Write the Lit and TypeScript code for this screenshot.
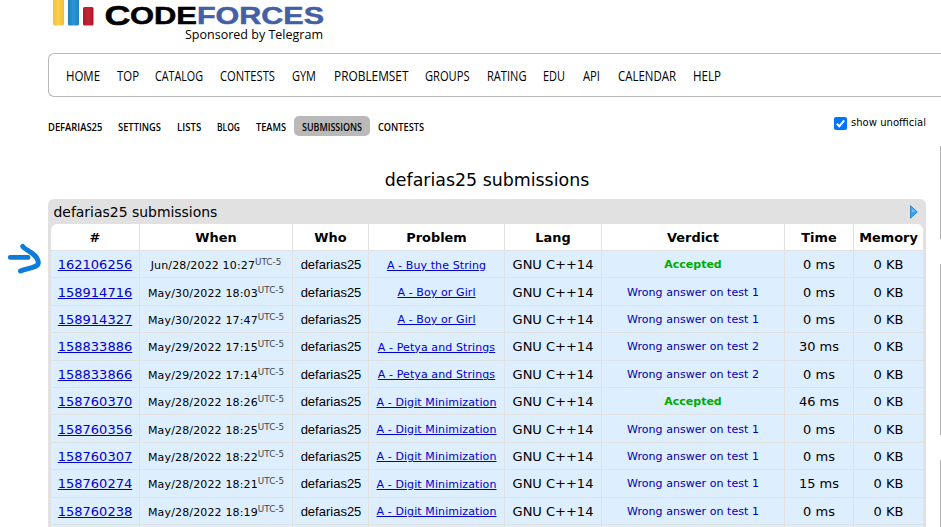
import { LitElement, html, svg, css } from "lit";
import { customElement } from "lit/decorators.js";
import { styleMap } from "lit/directives/style-map.js";

type Item = [label: string, width: number, gap: number];

const MENU: Item[] = [
  ["HOME", 34, 17], ["TOP", 22, 16], ["CATALOG", 48, 17], ["CONTESTS", 55, 17],
  ["GYM", 24, 17.5], ["PROBLEMSET", 74.5, 17], ["GROUPS", 44.5, 17], ["RATING", 39.5, 17],
  ["EDU", 22, 18], ["API", 17, 18], ["CALENDAR", 58, 17], ["HELP", 28, 0],
];

const TABS: [string, number][] = [
  ["DEFARIAS25", 54.3], ["SETTINGS", 43], ["LISTS", 24.2], ["BLOG", 23],
  ["TEAMS", 30], ["SUBMISSIONS", 60], ["CONTESTS", 46],
];

const HEADS = ["#", "When", "Who", "Problem", "Lang", "Verdict", "Time", "Memory"];

const ROWS: [string, string, string, string, string][] = [
  ["162106256", "Jun/28/2022 10:27", "A - Buy the String", "", "0 ms"],
  ["158914716", "May/30/2022 18:03", "A - Boy or Girl", "1", "0 ms"],
  ["158914327", "May/30/2022 17:47", "A - Boy or Girl", "1", "0 ms"],
  ["158833886", "May/29/2022 17:15", "A - Petya and Strings", "2", "30 ms"],
  ["158833866", "May/29/2022 17:14", "A - Petya and Strings", "2", "0 ms"],
  ["158760370", "May/28/2022 18:26", "A - Digit Minimization", "", "46 ms"],
  ["158760356", "May/28/2022 18:25", "A - Digit Minimization", "1", "0 ms"],
  ["158760307", "May/28/2022 18:22", "A - Digit Minimization", "1", "0 ms"],
  ["158760274", "May/28/2022 18:21", "A - Digit Minimization", "1", "15 ms"],
  ["158760238", "May/28/2022 18:19", "A - Digit Minimization", "1", "0 ms"],
];

const fitted = (label: string, width: number, height: number, baseline: number) => html`
  <svg width=${width} height=${height}>${svg`<text x="0" y=${baseline} textLength=${width} lengthAdjust="spacingAndGlyphs">${label}</text>`}</svg>`;

@customElement("app-root")
export class AppRoot extends LitElement {
  static styles = css`
    :host {
      display: block; position: relative; width: 941px; height: 527px; overflow: hidden;
      background: #fff; color: #000; font-family: Verdana, "DejaVu Sans", sans-serif;
    }
    * { box-sizing: border-box; }
    svg { display: block; overflow: visible; flex: none; }
    .page { margin-left: 48px; }
    .logo { height: 53px; }
    .menu {
      height: 44px; border: 1px solid #b9b9b9; border-right: 0; border-radius: 6px 0 0 6px;
      display: flex; align-items: center; padding-left: 17px;
      font: 15.2px "Open Sans", sans-serif;
    }
    .sub { display: flex; height: 20px; margin-top: 19px; width: 878px; align-items: center; }
    .tab { height: 20px; padding: 0 8px; border-radius: 5px; font: 650 10.8px "Open Sans", sans-serif; }
    .tab:first-child { padding-left: 0; }
    .tab.on { background: #b9b9b9; }
    .check { margin-left: auto; display: flex; align-items: center; gap: 4px; font-size: 10.4px; height: 13px; position: relative; top: -5px; }
    .check svg:first-child { position: relative; top: 2px; }
    h1 { margin: 31px 0 0; height: 32px; width: 878px; text-align: center; font-size: 17.4px; font-weight: 400; line-height: 26px; }
    .panel { width: 878px; background: #e1e1e1; border-radius: 6px 6px 0 0; padding: 0 3px; height: 340px; }
    .title { height: 25px; display: flex; align-items: center; justify-content: space-between; padding: 0 5px 0 2.5px; font-size: 13.95px; }
    .grid { border-radius: 6px 6px 0 0; overflow: hidden; }
    .row {
      display: grid; grid-template-columns: 89px 153px 76px 136px 97px 183px 69px 69px;
      height: 27.4px; background: #ddeeff; font-size: 13px;
    }
    .row.head { height: 27px; background: #fff; font-weight: 700; font-size: 12.9px; }
    .cell {
      border-right: 1px solid #e1e1e1; border-bottom: 1px solid #e1e1e1; padding-top: 2px;
      display: flex; align-items: center; justify-content: center; white-space: nowrap; line-height: 16px;
    }
    .cell:last-child { border-right: 0; }
    .when { font-size: 11px; padding-top: 4px; letter-spacing: .15px; }
    sup { font-size: 8.8px; letter-spacing: 0; color: #444; line-height: 8px; position: relative; top: -4px; vertical-align: baseline; }
    .who { font-family: "Liberation Sans", Arial, sans-serif; padding: 2px 0 0 1px; }
    a { color: #0000cc; text-decoration: underline; }
    .small { font-size: 11px; letter-spacing: .05px; }
    .problem { letter-spacing: .1px; padding-top: 3px; }
    .wrong { color: #0000aa; }
    .ok { color: #00aa00; font-weight: 700; font-size: 11px; }
    .side { position: absolute; left: 940px; width: 1px; background: #b0b0b0; }
    .arrow { position: absolute; left: 0; top: 240px; }
  `;

  private logo() {
    return html`<svg class="logo" width="300" height="53">
      <defs>
        <linearGradient id="y"><stop stop-color="#f7c22e"/><stop offset=".5" stop-color="#fbd050"/><stop offset="1" stop-color="#efbd31"/></linearGradient>
        <linearGradient id="b"><stop stop-color="#1d80c0"/><stop offset=".5" stop-color="#2b96d6"/><stop offset="1" stop-color="#1d83c4"/></linearGradient>
        <linearGradient id="r"><stop stop-color="#b0182a"/><stop offset=".5" stop-color="#c92335"/><stop offset="1" stop-color="#a91728"/></linearGradient>
      </defs>
      <rect x="5" y="-4" width="11" height="29.5" rx="1.5" fill="url(#y)"/>
      <rect x="20" y="-8" width="11" height="33.5" rx="1.5" fill="url(#b)"/>
      <rect x="35" y="7" width="10.5" height="18.5" rx="1.5" fill="url(#r)"/>
      <g font-family="Liberation Sans, Arial, sans-serif" font-weight="700" stroke-width=".5">
        <text x="56.5" y="24.7" font-size="28.5" textLength="26" lengthAdjust="spacingAndGlyphs" stroke="#000">C</text>
        <text x="82" y="24.4" font-size="24" textLength="67" lengthAdjust="spacingAndGlyphs" stroke="#000">ODE</text>
        <text x="149" y="24.4" font-size="24" textLength="127" lengthAdjust="spacingAndGlyphs" fill="#4460a4" stroke="#4460a4">FORCES</text>
      </g>
      <text x="137" y="39" font-family="Open Sans, sans-serif" font-size="13.4" textLength="138" lengthAdjust="spacingAndGlyphs">Sponsored by Telegram</text>
    </svg>`;
  }

  render() {
    return html`
      <div class="page">
        ${this.logo()}
        <nav class="menu">
          ${MENU.map(([t, w, g]) => html`<span style=${styleMap({ marginRight: g + "px" })}>${fitted(t, w, 20, 16)}</span>`)}
        </nav>
        <div class="sub">
          ${TABS.map(([t, w]) => html`<span class="tab ${t === "SUBMISSIONS" ? "on" : ""}">${fitted(t, w, 20, 15)}</span>`)}
          <label class="check">
            <svg width="13" height="13"><rect width="13" height="13" rx="2" fill="#0075ff"/><path d="M2.8 6.8 5.3 9.3 10.2 3.3" fill="none" stroke="#fff" stroke-width="2"/></svg>
            ${fitted("show unofficial", 75, 13, 11)}
          </label>
        </div>
        <h1>defarias25 submissions</h1>
        <section class="panel">
          <div class="title">
            <span>defarias25 submissions</span>
            <svg width="8" height="14"><path d="M.5.7 7.4 7 .5 13.2Z" fill="#36a0e8" stroke="#2680c4" stroke-width=".8"/><path d="M1.8 3.5 5.4 7H1.8Z" fill="#79c1f2"/></svg>
          </div>
          <div class="grid">
            <div class="row head">${HEADS.map((h) => html`<div class="cell">${h}</div>`)}</div>
            ${ROWS.map(([id, when, problem, test, time]) => html`
              <div class="row">
                <div class="cell"><a>${id}</a></div>
                <div class="cell when"><span>${when}<sup>UTC-5</sup></span></div>
                <div class="cell who">defarias25</div>
                <div class="cell small problem"><a>${problem}</a></div>
                <div class="cell">GNU C++14</div>
                ${test ? html`<div class="cell small wrong">Wrong answer on test ${test}</div>` : html`<div class="cell ok">Accepted</div>`}
                <div class="cell">${time}</div>
                <div class="cell">0 KB</div>
              </div>`)}
            <div class="row">${HEADS.map(() => html`<div class="cell"></div>`)}</div>
          </div>
        </section>
      </div>
      <svg class="arrow" width="44" height="36"><path d="M10.3 17.4H28M22.7 6.2C24 10 38 13 38.3 23 38 28 27 28 20.5 31" fill="none" stroke="#0c7bd9" stroke-width="4.9" stroke-linecap="round" stroke-linejoin="round"/></svg>
      ${[[146, 93], [264, 171], [460, 67]].map(([top, h]) => html`<div class="side" style=${styleMap({ top: top + "px", height: h + "px" })}></div>`)}
    `;
  }
}
